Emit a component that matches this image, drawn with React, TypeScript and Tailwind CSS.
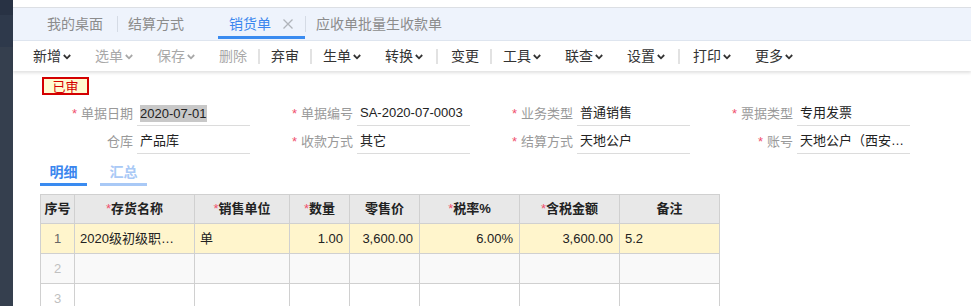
import React from "react";

const Chev = ({ c }: { c: string }) => (
  <svg width="8" height="6" viewBox="0 0 8 6" className="ml-[2px] mt-[1px]">
    <path d="M0.8 1L4 4.3L7.2 1" fill="none" stroke={c} strokeWidth="1.8" />
  </svg>
);

type TItem = { t?: string; chev?: boolean; dis?: boolean; sep?: boolean; wide?: boolean };
const tools: TItem[] = [
  { t: "新增", chev: true },
  { t: "选单", chev: true, dis: true },
  { t: "保存", chev: true, dis: true },
  { t: "删除", dis: true },
  { sep: true },
  { t: "弃审" },
  { sep: true },
  { t: "生单", chev: true },
  { t: "转换", chev: true },
  { sep: true, wide: true },
  { t: "变更" },
  { sep: true },
  { t: "工具", chev: true },
  { t: "联查", chev: true },
  { t: "设置", chev: true },
  { sep: true, wide: true },
  { t: "打印", chev: true },
  { t: "更多", chev: true },
];

type Field = { req?: boolean; label: string; value: string; sel?: boolean };
const rows: Field[][] = [
  [
    { req: true, label: "单据日期", value: "2020-07-01", sel: true },
    { req: true, label: "单据编号", value: "SA-2020-07-0003" },
    { req: true, label: "业务类型", value: "普通销售" },
    { req: true, label: "票据类型", value: "专用发票" },
  ],
  [
    { label: "仓库", value: "产品库" },
    { req: true, label: "收款方式", value: "其它" },
    { req: true, label: "结算方式", value: "天地公户" },
    { req: true, label: "账号", value: "天地公户（西安银行）" },
  ],
];

const cols = [
  { t: "序号", w: 34 },
  { t: "存货名称", w: 120, req: true },
  { t: "销售单位", w: 95, req: true },
  { t: "数量", w: 60, req: true },
  { t: "零售价", w: 70 },
  { t: "税率%", w: 100, req: true },
  { t: "含税金额", w: 100, req: true },
  { t: "备注", w: 100 },
];

export default function App() {
  return (
    <div className="flex w-[971px] h-[306px] overflow-hidden bg-white font-['Liberation_Sans','Noto_Sans_CJK_SC',sans-serif] text-[13px] text-[#222]">
      {/* sidebar */}
      <div className="w-[13px] flex flex-col shrink-0">
        <div className="h-[15px] shrink-0 bg-[#283244]" />
        <div className="h-[32px] shrink-0 bg-[#2e394b]" />
        <div className="flex-1 bg-[#353f4e]" />
      </div>
      <div className="flex-1 flex flex-col min-w-0">
        <div className="h-[8px] shrink-0 bg-white border-b border-[#dcdfe4]" />
        {/* tab bar */}
        <div className="h-[33px] shrink-0 bg-[#eef3fc] border-b border-[#dfe6f0] flex items-stretch pl-[23px] text-[14px]">
          <div className="flex items-center pl-[11px] pr-[14px] text-[#8c8c8c]">我的桌面</div>
          <div className="w-px h-[16px] bg-[#d5dbe5] self-center" />
          <div className="flex items-center pl-[10px] pr-[34px] text-[#8c8c8c]">结算方式</div>
          <div className="relative flex items-center pl-[11px] pr-[12px] text-[#3a86ee]">
            <span>销货单</span>
            <svg width="10" height="10" viewBox="0 0 10 10" className="ml-[12px]">
              <path d="M0.5 0.5L9.5 9.5M9.5 0.5L0.5 9.5" stroke="#b0b4ba" strokeWidth="1.3" />
            </svg>
            <div className="absolute left-0 right-0 bottom-[1px] h-[3px] bg-[#3a8bf0]" />
          </div>
          <div className="w-px h-[16px] bg-[#d5dbe5] self-center" />
          <div className="flex items-center pl-[10px] pr-[12px] text-[#8c8c8c]">应收单批量生收款单</div>
        </div>
        {/* toolbar */}
        <div className="h-[30px] shrink-0 bg-white flex items-center pl-[8px] text-[14px] shadow-[0_2px_3px_rgba(0,0,0,0.12)] relative z-10">
          {tools.map((it, i) =>
            it.sep ? (
              <div key={i} className={`w-[2px] h-[15px] bg-[#e2e2e2] ${it.wide ? "mx-[1px]" : "-mx-[1px]"}`} />
            ) : (
              <div key={i} className={`flex items-center px-[12px] ${it.dis ? "text-[#a8a8a8]" : "text-[#333]"}`}>
                <span>{it.t}</span>
                {it.chev && <Chev c={it.dis ? "#a8a8a8" : "#333"} />}
              </div>
            )
          )}
        </div>
        {/* content */}
        <div className="flex flex-col shrink-0">
          <div className="ml-[29px] mt-[6px] w-[47px] h-[18px] shrink-0 border-2 border-[#d40000] bg-[#fffbd2] text-[#d40000] text-[13px] flex items-center justify-center leading-none">
            已审
          </div>
          <div className="ml-[17px] mt-[6px] flex flex-col gap-[3px] shrink-0">
            {rows.map((r, ri) => (
              <div key={ri} className="flex">
                {r.map((f, fi) => (
                  <div key={fi} className="flex w-[220px] h-[25px]">
                    <div className="w-[107px] flex items-center justify-end pr-[4px] text-[#999]">
                      {f.req && <span className="text-[#f0506e] mr-[4px]">*</span>}
                      <span>{f.label}</span>
                    </div>
                    <div className="w-[113px] border-b border-[#dcdcdc] flex items-center pl-[3px] pr-[4px] overflow-hidden">
                      <span className={`truncate ${f.sel ? "bg-[#c8c8c8] leading-[17px]" : ""}`}>{f.value}</span>
                    </div>
                  </div>
                ))}
              </div>
            ))}
          </div>
          {/* sub tabs */}
          <div className="ml-[27px] mt-[7px] flex gap-[13px] text-[14px] font-bold shrink-0">
            <div className="w-[47px] h-[25px] flex flex-col">
              <div className="flex-1 flex items-center justify-center text-[#3a86ee]">明细</div>
              <div className="h-[3px] bg-[#3a8bf0]" />
            </div>
            <div className="w-[47px] h-[25px] flex flex-col">
              <div className="flex-1 flex items-center justify-center text-[#a9c9f6]">汇总</div>
              <div className="h-[3px] bg-[#a9c9f6]" />
            </div>
          </div>
          {/* table */}
          <table className="ml-[27px] mt-[8px] border-collapse table-fixed w-[680px]">
            <colgroup>
              {cols.map((c, i) => (
                <col key={i} style={{ width: c.w }} />
              ))}
            </colgroup>
            <thead>
              <tr className="h-[29px] bg-[#e8e8e8]">
                {cols.map((c, i) => (
                  <th key={i} className="border border-[#d0d0d0] font-bold text-[13px] text-[#222] text-center p-0">
                    {c.req && <span className="text-[#f0506e] font-normal">*</span>}
                    {c.t}
                  </th>
                ))}
              </tr>
            </thead>
            <tbody>
              <tr className="h-[30px] bg-[#fff5cc]">
                <td className="border border-[#d0d0d0] text-center text-[#666]">1</td>
                <td className="border border-[#d0d0d0] pl-[5px] pr-[18px] truncate">2020级初级职称培训</td>
                <td className="border border-[#d0d0d0] px-[5px]">单</td>
                <td className="border border-[#d0d0d0] px-[6px] text-right">1.00</td>
                <td className="border border-[#d0d0d0] px-[6px] text-right">3,600.00</td>
                <td className="border border-[#d0d0d0] px-[6px] text-right">6.00%</td>
                <td className="border border-[#d0d0d0] px-[6px] text-right">3,600.00</td>
                <td className="border border-[#d0d0d0] px-[5px]">5.2</td>
              </tr>
              {[2, 3].map((n) => (
                <tr key={n} className={`h-[30px] ${n === 2 ? "bg-[#f9f9f9]" : "bg-white"}`}>
                  <td className="border border-[#d0d0d0] text-center text-[#c0c0c0]">{n}</td>
                  {[0, 1, 2, 3, 4, 5, 6].map((k) => (
                    <td key={k} className="border border-[#d0d0d0]" />
                  ))}
                </tr>
              ))}
            </tbody>
          </table>
        </div>
      </div>
    </div>
  );
}
